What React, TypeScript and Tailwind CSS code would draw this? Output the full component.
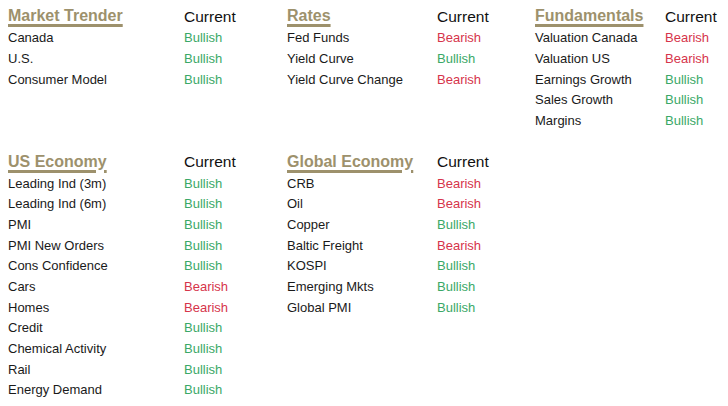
import React from 'react'

type Signal = 'Bullish' | 'Bearish'

interface Section {
  title: string
  labelWidth: string
  rows: [string, Signal][]
}

const top: Section[] = [
  {
    title: 'Market Trender',
    labelWidth: 'w-[176px]',
    rows: [
      ['Canada', 'Bullish'],
      ['U.S.', 'Bullish'],
      ['Consumer Model', 'Bullish'],
    ],
  },
  {
    title: 'Rates',
    labelWidth: 'w-[150px]',
    rows: [
      ['Fed Funds', 'Bearish'],
      ['Yield Curve', 'Bullish'],
      ['Yield Curve Change', 'Bearish'],
    ],
  },
  {
    title: 'Fundamentals',
    labelWidth: 'w-[130px]',
    rows: [
      ['Valuation Canada', 'Bearish'],
      ['Valuation US', 'Bearish'],
      ['Earnings Growth', 'Bullish'],
      ['Sales Growth', 'Bullish'],
      ['Margins', 'Bullish'],
    ],
  },
]

const bottom: Section[] = [
  {
    title: 'US Economy',
    labelWidth: 'w-[176px]',
    rows: [
      ['Leading Ind (3m)', 'Bullish'],
      ['Leading Ind (6m)', 'Bullish'],
      ['PMI', 'Bullish'],
      ['PMI New Orders', 'Bullish'],
      ['Cons Confidence', 'Bullish'],
      ['Cars', 'Bearish'],
      ['Homes', 'Bearish'],
      ['Credit', 'Bullish'],
      ['Chemical Activity', 'Bullish'],
      ['Rail', 'Bullish'],
      ['Energy Demand', 'Bullish'],
    ],
  },
  {
    title: 'Global Economy',
    labelWidth: 'w-[150px]',
    rows: [
      ['CRB', 'Bearish'],
      ['Oil', 'Bearish'],
      ['Copper', 'Bullish'],
      ['Baltic Freight', 'Bearish'],
      ['KOSPI', 'Bullish'],
      ['Emerging Mkts', 'Bullish'],
      ['Global PMI', 'Bullish'],
    ],
  },
]

// Fixed column widths so the second row of tables lines up with the first.
const colWidths = ['w-[279px]', 'w-[248px]', 'w-[193px]']

function SignalTable({ section, width }: { section: Section; width: string }) {
  return (
    <div className={`${width} shrink-0 flex flex-col`}>
      <div className="flex items-center h-[22.65px]">
        <div className={`${section.labelWidth} shrink-0`}>
          <span className="text-[16px] font-bold text-[#9d916c] underline decoration-[2.5px] underline-offset-[3px] leading-none">
            {section.title}
          </span>
        </div>
        <span className="text-[15.5px] text-[#111] leading-none">Current</span>
      </div>
      {section.rows.map(([label, signal]) => (
        <div key={label} className="flex items-center h-[20.7px] text-[13px]">
          <span className={`${section.labelWidth} shrink-0 text-[#1a1a1a]`}>{label}</span>
          <span className={signal === 'Bullish' ? 'text-[#3aa867]' : 'text-[#d6344b]'}>{signal}</span>
        </div>
      ))}
    </div>
  )
}

export default function App() {
  return (
    <div
      className="w-[728px] h-[406px] bg-white overflow-hidden pl-[8px] pt-[5px]"
      style={{ fontFamily: '"Liberation Sans", Arial, sans-serif' }}
    >
      <div className="flex items-start">
        {top.map((s, i) => (
          <SignalTable key={s.title} section={s} width={colWidths[i]} />
        ))}
      </div>
      <div className="flex items-start mt-[19.3px]">
        {bottom.map((s, i) => (
          <SignalTable key={s.title} section={s} width={colWidths[i]} />
        ))}
      </div>
    </div>
  )
}
